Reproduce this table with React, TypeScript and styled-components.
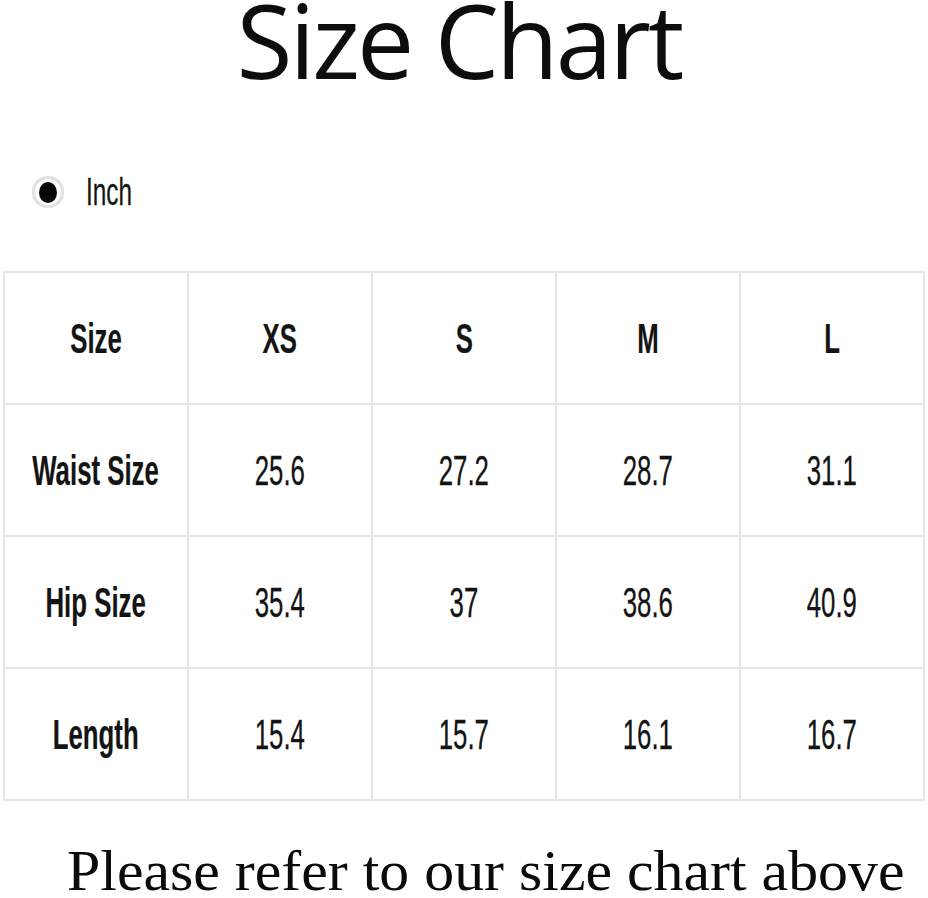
import React from "react";
import styled, { createGlobalStyle } from "styled-components";

const GlobalStyle = createGlobalStyle`
  html, body {
    margin: 0;
    padding: 0;
    background: #fff;
    color: #111;
  }
`;

const Page = styled.div`
  width: 928px;
  height: 898px;
  overflow: hidden;
`;

const Title = styled.h1`
  margin: 0;
  height: 96px;
  padding-right: 10px;
  font-family: "Open Sans", "DejaVu Sans", sans-serif;
  font-weight: 400;
  font-size: 102px;
  line-height: 80px;
  letter-spacing: -3px;
  text-align: center;
  color: #0d0d0d;
`;

const UnitRow = styled.div`
  display: flex;
  align-items: center;
  height: 50px;
  margin-top: 71px;
  padding-left: 32px;
  gap: 22px;
`;

const Radio = styled.span`
  width: 32px;
  height: 32px;
  box-sizing: border-box;
  border-radius: 50%;
  border: 3px solid #e2e2e2;
  box-shadow: 0 0 1px #cfcfcf;
  display: flex;
  align-items: center;
  justify-content: center;

  &::after {
    content: "";
    width: 18px;
    height: 21px;
    border-radius: 50%;
    background: #050505;
  }
`;

const Condensed = styled.span<{ $bold?: boolean; $size?: number; $scale?: number }>`
  display: inline-block;
  font-family: "Liberation Sans", Arial, sans-serif;
  font-weight: ${(p) => (p.$bold ? 700 : 400)};
  font-size: ${(p) => p.$size ?? 43}px;
  transform: scaleX(${(p) => p.$scale ?? 0.6});
  transform-origin: center;
  -webkit-text-stroke: ${(p) => (p.$bold ? "0.2px" : "0.3px")} #141414;
  color: #141414;
  white-space: nowrap;
`;

const UnitLabel = styled(Condensed)`
  transform-origin: left center;
`;

const Table = styled.table`
  margin: 54px 0 0 3px;
  width: 922px;
  border-collapse: collapse;
  table-layout: fixed;
`;

const Cell = styled.td`
  height: 130px;
  padding: 0;
  border: 2px solid #e6e6e6;
  vertical-align: middle;
`;

const CellInner = styled.div`
  display: flex;
  justify-content: center;
  align-items: center;
`;

const Note = styled.p`
  margin: 43px 0 0 67px;
  font-family: "Liberation Serif", "Times New Roman", serif;
  font-size: 57px;
  line-height: 54px;
  transform: scaleX(1.05);
  transform-origin: left center;
  color: #0a0a0a;
  white-space: nowrap;
`;

const sizes = ["XS", "S", "M", "L"];

const rows: { label: string; values: string[] }[] = [
  { label: "Waist Size", values: ["25.6", "27.2", "28.7", "31.1"] },
  { label: "Hip Size", values: ["35.4", "37", "38.6", "40.9"] },
  { label: "Length", values: ["15.4", "15.7", "16.1", "16.7"] },
];

function TextCell({ text, bold }: { text: string; bold?: boolean }) {
  return (
    <Cell>
      <CellInner>
        <Condensed $bold={bold}>{text}</Condensed>
      </CellInner>
    </Cell>
  );
}

export default function App() {
  return (
    <Page>
      <GlobalStyle />
      <Title>Size Chart</Title>
      <UnitRow>
        <Radio />
        <UnitLabel $size={38} $scale={0.64}>
          Inch
        </UnitLabel>
      </UnitRow>
      <Table>
        <tbody>
          <tr>
            <TextCell text="Size" bold />
            {sizes.map((s) => (
              <TextCell key={s} text={s} bold />
            ))}
          </tr>
          {rows.map((r) => (
            <tr key={r.label}>
              <TextCell text={r.label} bold />
              {r.values.map((v, i) => (
                <TextCell key={i} text={v} />
              ))}
            </tr>
          ))}
        </tbody>
      </Table>
      <Note>Please refer to our size chart above</Note>
    </Page>
  );
}
